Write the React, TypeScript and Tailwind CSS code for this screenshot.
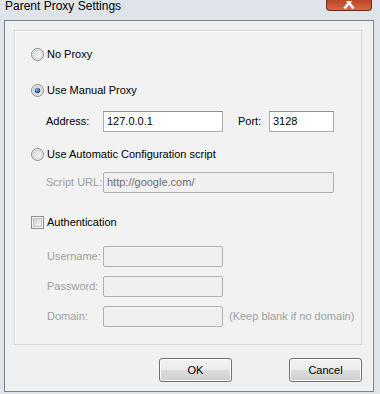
import React from "react";

function Radio({ checked }: { checked?: boolean }) {
  return (
    <svg width="13" height="13" viewBox="0 0 13 13" className="shrink-0">
      <defs>
        <linearGradient id={checked ? "rgOn" : "rgOff"} x1="0" y1="0" x2="1" y2="1">
          <stop offset="0" stopColor="#d6d6d6" />
          <stop offset="1" stopColor="#fbfbfb" />
        </linearGradient>
        <radialGradient id="dot" cx="0.4" cy="0.35" r="0.7">
          <stop offset="0" stopColor="#8fc1ee" />
          <stop offset="0.6" stopColor="#2a63ad" />
          <stop offset="1" stopColor="#18417a" />
        </radialGradient>
      </defs>
      <circle cx="6.5" cy="6.5" r="6" fill="#f4f4f4" stroke="#8a8a8a" />
      <circle cx="6.5" cy="6.5" r="4.5" fill={`url(#${checked ? "rgOn" : "rgOff"})`} stroke="#c8c8c8" strokeWidth="0.8" />
      {checked && <circle cx="6.5" cy="6.5" r="2.8" fill="url(#dot)" />}
    </svg>
  );
}

function Checkbox() {
  return (
    <svg width="13" height="13" viewBox="0 0 13 13" className="shrink-0">
      <defs>
        <linearGradient id="cb" x1="0" y1="0" x2="1" y2="1">
          <stop offset="0" stopColor="#cfcfcf" />
          <stop offset="1" stopColor="#f8f8f8" />
        </linearGradient>
      </defs>
      <rect x="0.5" y="0.5" width="12" height="12" fill="#f6f6f6" stroke="#8e8f8f" />
      <rect x="2.5" y="2.5" width="8" height="8" fill="url(#cb)" stroke="#b9b9b9" strokeWidth="0.8" />
    </svg>
  );
}

function Button({ children }: { children: React.ReactNode }) {
  return (
    <div className="w-[73px] h-[24px] rounded-[3px] border border-[#707070] bg-[linear-gradient(#f2f2f2_0%,#ebebeb_50%,#dddddd_51%,#cfcfcf_100%)] shadow-[inset_0_0_0_1px_#fcfcfc] flex items-center justify-center text-[11px] text-black">
      {children}
    </div>
  );
}

export default function App() {
  return (
    <div className="w-[380px] h-[394px] bg-[#dfe4ea] overflow-hidden font-['Liberation_Sans',Arial,sans-serif] text-[11px] text-black">
      {/* title bar */}
      <div className="h-[20px] flex items-start justify-between">
        <div className="pl-[5px] mt-[-1px] text-[12px] leading-[14px] text-black">Parent Proxy Settings</div>
        <div className="mr-[8px] w-[46px] h-[11px] rounded-b-[4px] border border-t-0 border-[#6e2a1c] bg-[linear-gradient(#b9452a,#d9683f)] flex items-end justify-center overflow-hidden">
          <svg width="14" height="9" viewBox="0 0 14 9">
            <path d="M2.5 -4 L11.5 7.5 M11.5 -4 L2.5 7.5" stroke="#f5f3f7" strokeWidth="2.8" />
          </svg>
        </div>
      </div>

      {/* client area */}
      <div className="ml-[4px] mr-[6px] h-[372px] border border-[#7b8590] bg-[#f0f0f0] pt-[9px] pl-[9px] pr-[11px]">
        <div className="h-[315px] border border-[#d5d5d5] bg-[#f2f2f2] shadow-[inset_1px_1px_0_#ffffff] flex flex-col">
          <div className="mt-[13px] h-[20px] flex items-center pl-[16px] gap-[3px]">
            <Radio />
            <span>No Proxy</span>
          </div>
          <div className="mt-[16px] h-[20px] flex items-center pl-[16px] gap-[3px]">
            <Radio checked />
            <span>Use Manual Proxy</span>
          </div>
          <div className="mt-[11px] h-[21px] flex items-center pl-[31px]">
            <span className="w-[57px]">Address:</span>
            <div className="w-[120px] h-[21px] bg-white border border-[#abadb3] border-t-[#8e8f8f] flex items-center px-[3px]">127.0.0.1</div>
            <span className="ml-[15px] w-[31px]">Port:</span>
            <div className="w-[65px] h-[21px] bg-white border border-[#abadb3] border-t-[#8e8f8f] flex items-center px-[3px]">3128</div>
          </div>
          <div className="mt-[12px] h-[20px] flex items-center pl-[16px] gap-[3px]">
            <Radio />
            <span>Use Automatic Configuration script</span>
          </div>
          <div className="mt-[8px] h-[21px] flex items-center pl-[31px]">
            <span className="w-[57px] text-[#a0a0a0]">Script URL:</span>
            <div className="w-[231px] h-[21px] rounded-[2px] bg-[#f0f0f0] border border-[#adb2b5] flex items-center px-[3px] text-[#6d6d6d]">http://google.com/</div>
          </div>
          <div className="mt-[19px] h-[20px] flex items-center pl-[16px] gap-[3px]">
            <Checkbox />
            <span>Authentication</span>
          </div>
          <div className="mt-[14px] h-[21px] flex items-center pl-[32px]">
            <span className="w-[56px] text-[#a0a0a0]">Username:</span>
            <div className="w-[120px] h-[21px] rounded-[2px] bg-[#f0f0f0] border border-[#adb2b5]" />
          </div>
          <div className="mt-[9px] h-[21px] flex items-center pl-[32px]">
            <span className="w-[56px] text-[#a0a0a0]">Password:</span>
            <div className="w-[120px] h-[21px] rounded-[2px] bg-[#f0f0f0] border border-[#adb2b5]" />
          </div>
          <div className="mt-[9px] h-[21px] flex items-center pl-[32px]">
            <span className="w-[56px] text-[#a0a0a0]">Domain:</span>
            <div className="w-[120px] h-[21px] rounded-[2px] bg-[#f0f0f0] border border-[#adb2b5]" />
            <span className="ml-[6px] text-[#a0a0a0]">(Keep blank if no domain)</span>
          </div>
        </div>

        <div className="mt-[13px] flex justify-end gap-[57px]">
          <Button>OK</Button>
          <Button>Cancel</Button>
        </div>
      </div>
    </div>
  );
}
